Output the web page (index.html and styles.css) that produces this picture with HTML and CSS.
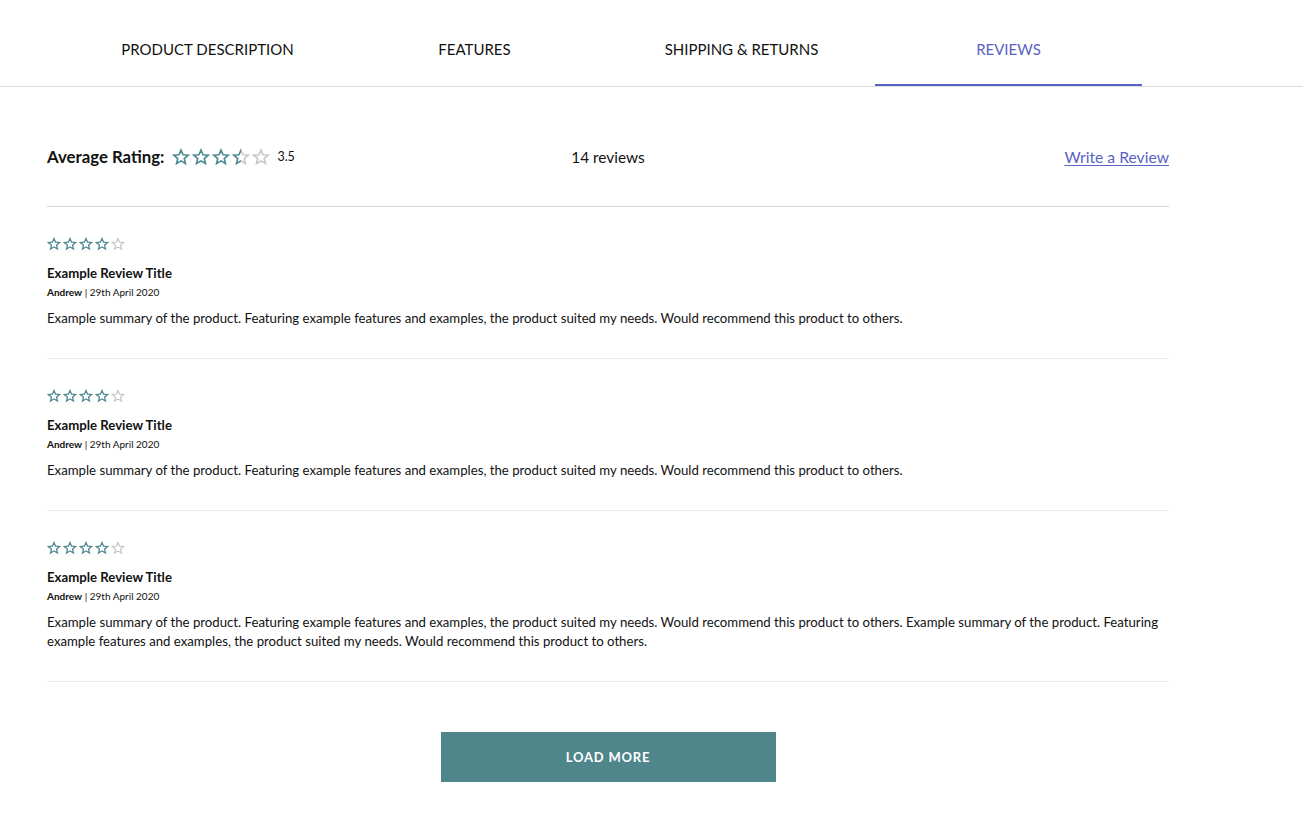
FILE: index.html
```html
<!DOCTYPE html>
<html>
<head>
<meta charset="utf-8">
<link rel="stylesheet" href="styles.css">
</head>
<body>
<svg width="0" height="0" class="defs">
  <defs>
    <symbol id="star" viewBox="0 0 24 24">
      <path d="M12 2.8l2.75 6.2 6.75.6-5.1 4.45 1.5 6.6L12 17.2l-5.9 3.45 1.5-6.6L2.5 9.6l6.75-.6z" fill="none" stroke-width="2.2" stroke-linejoin="miter"/>
    </symbol>
    <clipPath id="lefthalf"><rect x="0" y="0" width="12" height="24"/></clipPath>
    <clipPath id="righthalf"><rect x="12" y="0" width="12" height="24"/></clipPath>
  </defs>
</svg>
<nav class="tabs">
  <div class="tabs-inner">
    <div class="tab">PRODUCT DESCRIPTION</div>
    <div class="tab">FEATURES</div>
    <div class="tab">SHIPPING &amp; RETURNS</div>
    <div class="tab active">REVIEWS</div>
  </div>
</nav>
<main class="reviews">
  <div class="summary">
    <div class="avg">
      <span class="avg-label">Average Rating:</span>
      <span class="stars big">
        <svg class="on"><use href="#star"/></svg>
        <svg class="on"><use href="#star"/></svg>
        <svg class="on"><use href="#star"/></svg>
        <svg viewBox="0 0 24 24"><g clip-path="url(#lefthalf)" class="on"><use href="#star"/></g><g clip-path="url(#righthalf)" class="off"><use href="#star"/></g></svg>
        <svg class="off"><use href="#star"/></svg>
      </span>
      <span class="avg-num">3.5</span>
    </div>
    <div class="count">14 reviews</div>
    <a class="write" href="#">Write a Review</a>
  </div>

  <article class="review">
    <div class="stars small">
      <svg class="on"><use href="#star"/></svg><svg class="on"><use href="#star"/></svg><svg class="on"><use href="#star"/></svg><svg class="on"><use href="#star"/></svg><svg class="off"><use href="#star"/></svg>
    </div>
    <h3 class="title">Example Review Title</h3>
    <div class="meta"><b>Andrew</b> | 29th April 2020</div>
    <p class="body">Example summary of the product. Featuring example features and examples, the product suited my needs. Would recommend this product to others.</p>
  </article>

  <article class="review">
    <div class="stars small">
      <svg class="on"><use href="#star"/></svg><svg class="on"><use href="#star"/></svg><svg class="on"><use href="#star"/></svg><svg class="on"><use href="#star"/></svg><svg class="off"><use href="#star"/></svg>
    </div>
    <h3 class="title">Example Review Title</h3>
    <div class="meta"><b>Andrew</b> | 29th April 2020</div>
    <p class="body">Example summary of the product. Featuring example features and examples, the product suited my needs. Would recommend this product to others.</p>
  </article>

  <article class="review">
    <div class="stars small">
      <svg class="on"><use href="#star"/></svg><svg class="on"><use href="#star"/></svg><svg class="on"><use href="#star"/></svg><svg class="on"><use href="#star"/></svg><svg class="off"><use href="#star"/></svg>
    </div>
    <h3 class="title">Example Review Title</h3>
    <div class="meta"><b>Andrew</b> | 29th April 2020</div>
    <p class="body">Example summary of the product. Featuring example features and examples, the product suited my needs. Would recommend this product to others. Example summary of the product. Featuring example features and examples, the product suited my needs. Would recommend this product to others.</p>
  </article>

  <div class="more-wrap">
    <button class="more">LOAD MORE</button>
  </div>
</main>
</body>
</html>
```
FILE: styles.css
```css
* { box-sizing: border-box; }
html, body { margin: 0; padding: 0; background: #fff; }
body {
  font-family: "Lato", "Liberation Sans", sans-serif;
  color: #111;
}
.defs { position: absolute; width: 0; height: 0; overflow: hidden; }

.tabs {
  border-bottom: 1px solid #dcdcdc;
  height: 87px;
}
.tabs-inner {
  width: 1068px;
  margin-left: 74px;
  display: grid;
  grid-template-columns: repeat(4, 1fr);
  height: 100%;
}
.tab {
  display: flex;
  align-items: flex-start;
  justify-content: center;
  padding-top: 40px;
  font-size: 15px;
  color: #111;
  height: 100%;
}
.tab.active {
  color: #5a62c4;
  border-bottom: 2px solid #5a62c4;
  margin-bottom: -1px;
}

.reviews {
  width: 1122px;
  margin-left: 47px;
}
.summary {
  display: grid;
  grid-template-columns: 1fr auto 1fr;
  align-items: center;
  height: 120px;
  padding-top: 20px;
  border-bottom: 1px solid #d6d6d6;
}
.avg { display: flex; align-items: center; }
.avg-label { font-size: 16.8px; font-weight: 700; margin-right: 8px; }
.avg-num { font-size: 12.5px; margin-left: 5px; }
.count { font-size: 15.4px; text-align: center; }
.write {
  justify-self: end;
  font-size: 15.7px;
  color: #5a62c4;
  text-decoration: underline;
  text-underline-offset: 2px;
}

.stars { display: flex; }
.stars svg { display: block; }
.stars.big svg { width: 18px; height: 18px; margin-right: 2px; }
.stars.small svg { width: 14px; height: 14px; margin-right: 2px; }
svg.on use, g.on use { stroke: #4e8a93; }
svg.off use, g.off use { stroke: #c9c9c9; }

.review {
  border-bottom: 1px solid #e8e8e8;
  padding: 30px 0 30px;
}
.title { font-size: 13.2px; font-weight: 700; margin: 13px 0 3px; line-height: 18px; }
.meta { font-size: 10px; line-height: 14px; }
.body { font-size: 13.2px; line-height: 19px; margin: 10px 0 0; }

.more-wrap { display: flex; justify-content: center; padding-top: 50px; }
.more {
  width: 335px;
  height: 50px;
  background: #4e868c;
  border: 0;
  color: #fff;
  font-family: inherit;
  font-weight: 700;
  font-size: 13px;
  letter-spacing: 0.8px;
}
```
